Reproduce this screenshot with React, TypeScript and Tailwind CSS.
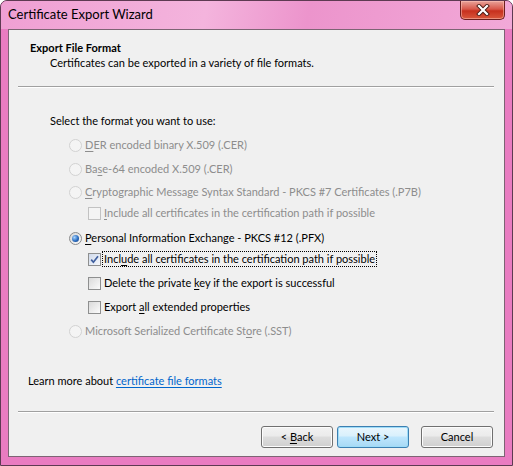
import type { ReactNode } from 'react';

function Radio({ checked, disabled }: { checked?: boolean; disabled?: boolean }) {
  return (
    <span
      className={`inline-flex h-[13px] w-[13px] shrink-0 items-center justify-center rounded-full border ${
        disabled
          ? 'border-[#d2d2d2] bg-[#f4f4f4]'
          : 'border-[#8a8b8c] bg-gradient-to-br from-[#d6d6d6] to-[#fbfbfb]'
      }`}
    >
      {checked && (
        <span className="h-[7px] w-[7px] rounded-full bg-[radial-gradient(circle_at_35%_35%,#a9d6ff,#2a6cc0_55%,#163f7a)]" />
      )}
    </span>
  );
}

function Check({ checked, disabled }: { checked?: boolean; disabled?: boolean }) {
  return (
    <span
      className={`inline-flex h-[13px] w-[13px] shrink-0 items-center justify-center border ${
        disabled
          ? 'border-[#c2c2c2] bg-[#f4f4f4]'
          : checked
            ? 'border-[#8e8f8f] bg-gradient-to-br from-[#cfd9ea] to-[#f6f8fc]'
            : 'border-[#8e8f8f] bg-gradient-to-br from-[#dadada] to-[#fbfbfb]'
      }`}
    >
      {checked && (
        <svg width="9" height="9" viewBox="0 0 9 9">
          <path d="M1.2 4.6 L3.4 7.2 L8 1.2" stroke="#3f5f9e" strokeWidth="1.7" fill="none" />
        </svg>
      )}
    </span>
  );
}

// access key underline
function U({ children }: { children: ReactNode }) {
  return <span className="underline underline-offset-[2px]">{children}</span>;
}

function RadioRow({
  mt,
  checked,
  disabled,
  children,
}: {
  mt: string;
  checked?: boolean;
  disabled?: boolean;
  children: ReactNode;
}) {
  return (
    <div className={`${mt} flex h-[16px] items-center pl-[60px]`}>
      <Radio checked={checked} disabled={disabled} />
      <span className={`ml-[3px] whitespace-pre ${disabled ? 'text-[#8d8d8d]' : 'text-black'}`}>
        {children}
      </span>
    </div>
  );
}

function CheckRow({
  mt,
  checked,
  disabled,
  focused,
  children,
}: {
  mt: string;
  checked?: boolean;
  disabled?: boolean;
  focused?: boolean;
  children: ReactNode;
}) {
  return (
    <div className={`${mt} flex h-[16px] items-center pl-[79px]`}>
      <Check checked={checked} disabled={disabled} />
      <span
        className={`ml-[1px] whitespace-pre border px-[1px] leading-[14px] ${
          focused ? 'border-dotted border-black' : 'border-transparent'
        } ${disabled ? 'text-[#8d8d8d]' : 'text-black'}`}
      >
        {children}
      </span>
    </div>
  );
}

function Button({ children, primary }: { children: ReactNode; primary?: boolean }) {
  return (
    <div
      className={`flex h-[22px] w-[72px] items-center justify-center rounded-[3px] border ${
        primary
          ? 'border-[#3c7fb1] bg-[linear-gradient(#eaf6fd_0%,#d9f0fc_45%,#bee6fd_50%,#a7d9f5_100%)] shadow-[inset_0_0_0_1px_#9edcf8]'
          : 'border-[#707070] bg-[linear-gradient(#f2f2f2_0%,#ebebeb_45%,#dddddd_50%,#cfcfcf_100%)] shadow-[inset_0_0_0_1px_#fcfcfc]'
      }`}
    >
      <span className="whitespace-pre">{children}</span>
    </div>
  );
}

export default function App() {
  return (
    <div className="flex h-[466px] w-[513px] flex-col overflow-hidden rounded-t-[7px] border border-[#5e3a52] bg-[#e97cc1] font-['Lato','Liberation_Sans',sans-serif] text-[11px] leading-[16px] text-black">
      {/* title bar */}
      <div className="flex h-[28px] shrink-0 items-start bg-[linear-gradient(100deg,#ef9fd3_0%,#f4b4dd_40%,#ec94cc_60%,#f2a9d8_100%)]">
        <div className="pl-[7px] pt-[5px] text-[13px] leading-[17px] text-black">Certificate Export Wizard</div>
        <div className="ml-auto mr-[7px] flex h-[19px] w-[45px] items-center justify-center rounded-b-[5px] border border-t-0 border-[#6b1f1f] bg-[linear-gradient(#e9a39a_0%,#d8574a_45%,#c7301e_55%,#d9573c_100%)] shadow-[inset_0_0_0_1px_rgba(255,200,190,0.5)]">
          <svg width="14" height="12" viewBox="0 0 14 12">
            <path d="M3 2 L11 10 M11 2 L3 10" stroke="#4a1a14" strokeWidth="4" strokeLinecap="square" />
            <path d="M3 2 L11 10 M11 2 L3 10" stroke="#ffffff" strokeWidth="2.2" strokeLinecap="square" />
          </svg>
        </div>
      </div>

      {/* client area */}
      <div className="flex-1 px-[7px] pb-[8px]">
        <div className="flex h-full flex-col border border-[#7d6474] bg-[#f0f0f0]">
          {/* header */}
          <div className="pl-[21px] pt-[10px]">
            <div className="h-[15px] font-bold leading-[15px]">Export File Format</div>
            <div className="pl-[20px]">Certificates can be exported in a variety of file formats.</div>
          </div>
          <div className="ml-[9px] mr-[10px] mt-[15px] h-[2px] border-t border-b border-t-[#a0a0a0] border-b-white" />

          <div className="mt-[25px] h-[16px] pl-[41px]">Select the format you want to use:</div>

          <RadioRow mt="mt-[8px]" disabled>
            <U>D</U>ER encoded binary X.509 (.CER)
          </RadioRow>
          <RadioRow mt="mt-[8px]" disabled>
            Ba<U>s</U>e-64 encoded X.509 (.CER)
          </RadioRow>
          <RadioRow mt="mt-[7px]" disabled>
            <U>C</U>ryptographic Message Syntax Standard - PKCS #7 Certificates (.P7B)
          </RadioRow>
          <CheckRow mt="mt-[5px]" disabled>
            <U>I</U>nclude all certificates in the certification path if possible
          </CheckRow>
          <RadioRow mt="mt-[9px]" checked>
            <U>P</U>ersonal Information Exchange - PKCS #12 (.PFX)
          </RadioRow>
          <CheckRow mt="mt-[5px]" checked focused>
            Incl<U>u</U>de all certificates in the certification path if possible
          </CheckRow>
          <CheckRow mt="mt-[8px]">
            Delete the private <U>k</U>ey if the export is successful
          </CheckRow>
          <CheckRow mt="mt-[8px]">
            Export <U>a</U>ll extended properties
          </CheckRow>
          <RadioRow mt="mt-[8px]" disabled>
            Microsoft Serialized Certificate St<U>o</U>re (.SST)
          </RadioRow>

          <div className="mt-[34px] h-[16px] pl-[19px]">
            Learn more about <span className="text-[#0066cc] underline underline-offset-[2px]">certificate file formats</span>
          </div>

          <div className="ml-[9px] mr-[10px] mt-[22px] h-[2px] border-t border-b border-t-[#a0a0a0] border-b-white" />

          {/* buttons */}
          <div className="mr-[11px] mt-[13px] flex justify-end">
            <Button>
              &lt; <U>B</U>ack
            </Button>
            <div className="ml-[4px]">
              <Button primary>Next &gt;</Button>
            </div>
            <div className="ml-[12px]">
              <Button>Cancel</Button>
            </div>
          </div>
        </div>
      </div>
    </div>
  );
}
